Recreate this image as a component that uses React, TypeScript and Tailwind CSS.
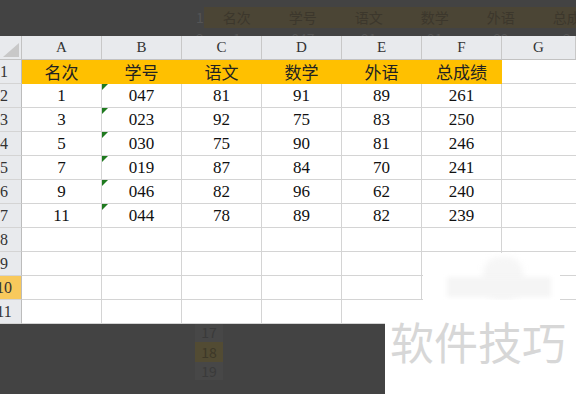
const cols = ["A", "B", "C", "D", "E", "F"];
const heads = ["名次", "学号", "语文", "数学", "外语", "总成绩"];
const rows = [
  ["1", "047", "81", "91", "89", "261"],
  ["3", "023", "92", "75", "83", "250"],
  ["5", "030", "75", "90", "81", "246"],
  ["7", "019", "87", "84", "70", "241"],
  ["9", "046", "82", "96", "62", "240"],
  ["11", "044", "78", "89", "82", "239"],
];
const ghostHeads = ["名次", "学号", "语文", "数学", "外语", "总成"];
const ghostRow = ["1", "047", "91", "91", "89", "2"];

function RowHead({ n, active }: { n: number; active?: boolean }) {
  return (
    <div
      className={`w-[22px] shrink-0 overflow-hidden border-r border-b border-r-[#bcbcbc] border-b-[#d4d4d4] ${
        active ? "bg-[#f8c95c]" : "bg-[#e8eaed]"
      }`}
    >
      <div className="ml-[-7px] w-[22px] text-center text-[16px] leading-[23px] text-[#333]">{n}</div>
    </div>
  );
}

function GreenFlag() {
  return (
    <span className="absolute left-0 top-0 h-0 w-0 border-t-[6px] border-r-[6px] border-t-[#1f7a1f] border-r-transparent" />
  );
}

export default function App() {
  return (
    <div className="relative w-[576px] h-[394px] overflow-hidden bg-white font-['Liberation_Serif','Noto_Sans_CJK_SC',serif]">
      {/* dimmed band at top */}
      <div className="h-[36px] overflow-hidden bg-[#434343] pt-[7px] pl-[196px] font-['Noto_Sans_CJK_SC',sans-serif]">
        <div className="flex h-[21px] items-center">
          <div className="w-[26px] text-center text-[14px] text-[#555]">1</div>
          <div className="flex h-full flex-1 items-center bg-[#4b4535]">
            {ghostHeads.map((h) => (
              <div key={h} className="w-[66px] shrink-0 text-center text-[14px] text-[#3c372c]">
                {h}
              </div>
            ))}
          </div>
        </div>
        <div className="flex h-[8px] items-start overflow-hidden pt-[2px]">
          <div className="w-[26px] text-center text-[14px] leading-[16px] text-[#555]">2</div>
          {ghostRow.map((v, i) => (
            <div key={i} className="w-[66px] shrink-0 text-center text-[14px] leading-[16px] text-[#555]">
              {v}
            </div>
          ))}
        </div>
      </div>

      {/* column headers */}
      <div className="flex h-[24px] border-b border-[#c2c2c2] bg-[#e8eaed]">
        <div className="relative w-[22px] shrink-0 border-r border-[#c2c2c2]">
          <svg className="absolute left-[3px] top-[7px]" width="16" height="14" viewBox="0 0 16 14">
            <polygon points="16,0 16,14 0,14" fill="#c8c8c8" />
          </svg>
        </div>
        {[...cols, "G"].map((c) => (
          <div
            key={c}
            className={`${c === "G" ? "flex-1" : "w-[80px]"} shrink-0 border-r border-[#c8c8c8] text-center text-[15px] leading-[23px] text-[#333]`}
          >
            {c}
          </div>
        ))}
      </div>

      {/* row 1 */}
      <div className="flex h-[24px]">
        <RowHead n={1} />
        {heads.map((h) => (
          <div
            key={h}
            className="w-[80px] shrink-0 border-r border-b border-[#ffc000] bg-[#ffc000] text-center text-[17px] leading-[23px] text-[#222] font-['Noto_Sans_CJK_SC',sans-serif]"
          >
            {h}
          </div>
        ))}
        <div className="flex-1 border-b border-[#d4d4d4]" />
      </div>

      {/* data rows */}
      {rows.map((r, ri) => (
        <div key={ri} className="flex h-[24px]">
          <RowHead n={ri + 2} />
          {r.map((v, ci) => (
            <div
              key={ci}
              className="relative w-[80px] shrink-0 border-r border-b border-[#d4d4d4] text-center text-[17px] leading-[23px] text-[#111]"
            >
              {ci === 1 && <GreenFlag />}
              {v}
            </div>
          ))}
          <div className="flex-1 border-b border-[#d4d4d4]" />
        </div>
      ))}

      {/* empty rows */}
      {[8, 9, 10, 11].map((n) => (
        <div key={n} className="flex h-[24px]">
          <RowHead n={n} active={n === 10} />
          {cols.map((c) => (
            <div key={c} className="w-[80px] shrink-0 border-r border-b border-[#d4d4d4]" />
          ))}
          <div className="flex-1 border-b border-[#d4d4d4]" />
        </div>
      ))}

      {/* bottom band */}
      <div className="flex h-[70px]">
        <div className="w-[385px] shrink-0 bg-[#434343] pl-[195px] font-['Noto_Sans_CJK_SC',sans-serif]">
          <div className="w-[28px] bg-[#474747]">
            <div className="h-[18px] text-center text-[14px] leading-[16px] text-[#3a3a3a]">17</div>
            <div className="h-[20px] bg-[#524b33] text-center text-[14px] leading-[20px] text-[#3d3828]">18</div>
            <div className="h-[18px] text-center text-[14px] leading-[18px] text-[#3a3a3a]">19</div>
          </div>
        </div>
        <div className="flex-1 bg-white" />
      </div>

      {/* watermark overlays */}
      <div className="absolute left-[423px] top-[253px] h-[48px] w-[137px] bg-white">
        <div className="absolute left-[60px] top-[4px] h-[42px] w-[40px] rounded-[16px] bg-[#f6f6f6] blur-[3px]" />
        <div className="absolute left-[24px] top-[24px] h-[20px] w-[104px] bg-[#f5f5f5] blur-[2px]" />
      </div>
      <div className="absolute left-[385px] top-[300px] flex h-[94px] w-[191px] items-start bg-white pl-[5px] pt-[13px]">
        <span className="text-[44px] leading-[56px] text-[#d7d7d7] font-['Noto_Sans_CJK_SC',sans-serif]">
          软件技巧
        </span>
      </div>
    </div>
  );
}
